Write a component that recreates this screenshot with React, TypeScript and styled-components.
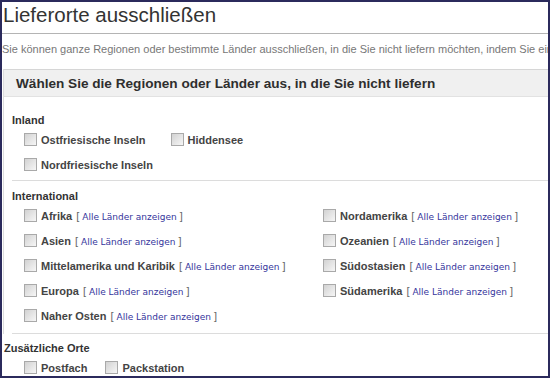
import React from 'react';
import styled, {createGlobalStyle} from 'styled-components';

const GlobalStyle = createGlobalStyle`
  html, body {
    margin: 0;
    padding: 0;
    background: #ffffff;
  }
`;

const Frame = styled.div`
  width: 550px;
  height: 378px;
  box-sizing: border-box;
  border: 2px solid #2b2a5c;
  overflow: hidden;
  background: #fff;
  font-family: "Liberation Sans", Arial, sans-serif;
  color: #333;
`;

const Title = styled.h1`
  margin: 0;
  padding: 0 0 5px 1px;
  font-size: 20.5px;
  line-height: 26px;
  font-weight: normal;
  color: #333;
  border-bottom: 1px solid #b4b4b4;
`;

const Intro = styled.p`
  margin: 8px 0 13px 0;
  font-size: 11px;
  line-height: 14px;
  color: #777;
  white-space: nowrap;
  overflow: hidden;
`;

const Panel = styled.div`
  margin-left: 1px;
  border-left: 1px solid #dcdcdc;
`;

const PanelHeader = styled.div`
  height: 26px;
  display: flex;
  align-items: center;
  padding-left: 12px;
  background: #f0f0f0;
  border-top: 1px solid #d6d6d6;
  border-bottom: 1px solid #e2e2e2;
  font-size: 13.6px;
  font-weight: bold;
  color: #2e2e2e;
`;

const PanelBody = styled.div`
  padding-top: 8px;
`;

const Section = styled.div<{$pb: number}>`
  margin-left: 8px;
  padding: 8px 0 ${p => p.$pb}px 0;
  border-bottom: 1px solid #dcdcdc;
`;

const Heading = styled.div`
  font-size: 11px;
  font-weight: bold;
  line-height: 14px;
  color: #333;
`;

const Extra = styled.div`
  margin-left: 2px;
  padding-top: 7px;
`;

const Rows = styled.div<{$indent: number}>`
  padding-left: ${p => p.$indent}px;
`;

const Row = styled.div<{$gap: number}>`
  display: flex;
  align-items: center;
  height: 25px;
  gap: ${p => p.$gap}px;
`;

const Grid = styled.div`
  padding-left: 12px;
  display: grid;
  grid-template-columns: 299px 1fr;
  grid-auto-rows: 25px;
`;

const Item = styled.label`
  display: flex;
  align-items: center;
  white-space: nowrap;
`;

const Box = styled.span`
  display: inline-block;
  width: 11px;
  height: 11px;
  border: 1px solid #a9a9a9;
  background: linear-gradient(135deg, #d2d2d2 0%, #e6e6e6 55%, #f6f6f6 100%);
  margin-right: 4px;
  flex-shrink: 0;
`;

const Label = styled.span`
  font-size: 11px;
  font-weight: bold;
  color: #444;
`;

const Bracket = styled.span`
  font-size: 11px;
  color: #666;
  margin-left: 4px;
`;

const ShowLink = styled.a`
  font-family: "DejaVu Sans", Verdana, sans-serif;
  font-size: 9px;
  color: #35359c;
  text-decoration: none;
  margin: 0 3px;
`;

const Check: React.FC<{label: string; all?: boolean}> = ({label, all}) => (
    <Item>
        <Box/>
        <Label>{label}</Label>
        {all && (
            <Bracket>
                [<ShowLink href="#">Alle Länder anzeigen</ShowLink>]
            </Bracket>
        )}
    </Item>
);

const international = [
    'Afrika', 'Nordamerika',
    'Asien', 'Ozeanien',
    'Mittelamerika und Karibik', 'Südostasien',
    'Europa', 'Südamerika',
    'Naher Osten'
];

const App: React.FC = () => (
    <>
        <GlobalStyle/>
        <Frame>
            <Title>Lieferorte ausschließen</Title>
            <Intro>
                Sie können ganze Regionen oder bestimmte Länder ausschließen, in die Sie nicht liefern möchten, indem Sie einen Haken setzen.
            </Intro>
            <Panel>
                <PanelHeader>Wählen Sie die Regionen oder Länder aus, in die Sie nicht liefern</PanelHeader>
                <PanelBody>
                    <Section $pb={3}>
                        <Heading>Inland</Heading>
                        <Rows $indent={12}>
                            <Row $gap={25}>
                                <Check label="Ostfriesische Inseln"/>
                                <Check label="Hiddensee"/>
                            </Row>
                            <Row $gap={25}>
                                <Check label="Nordfriesische Inseln"/>
                            </Row>
                        </Rows>
                    </Section>
                    <Section $pb={5}>
                        <Heading>International</Heading>
                        <Grid>
                            {international.map(name => (
                                <Check key={name} label={name} all/>
                            ))}
                        </Grid>
                    </Section>
                </PanelBody>
            </Panel>
            <Extra>
                <Heading>Zusätzliche Orte</Heading>
                <Rows $indent={20}>
                    <Row $gap={18}>
                        <Check label="Postfach"/>
                        <Check label="Packstation"/>
                    </Row>
                </Rows>
            </Extra>
        </Frame>
    </>
);

export default App;
